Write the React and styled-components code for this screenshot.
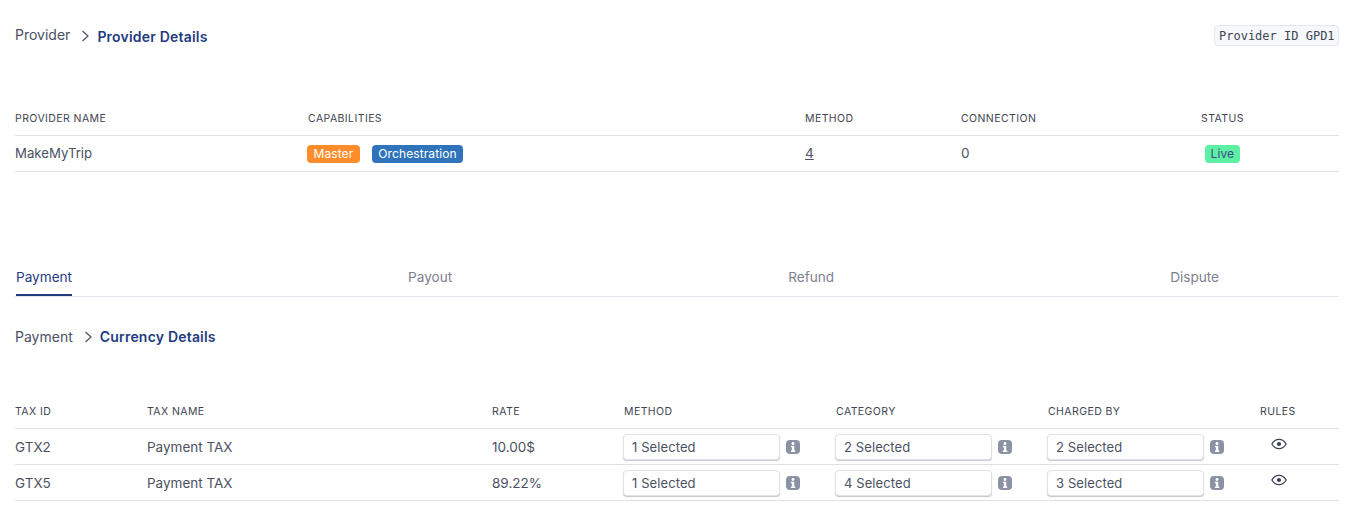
import React from "react";
import styled, { createGlobalStyle } from "styled-components";

const Global = createGlobalStyle`
  html, body { margin: 0; padding: 0; background: #fff; }
  body { font-family: Inter, "Liberation Sans", sans-serif; color: #414552; }
  * { box-sizing: border-box; }
`;
const Page = styled.div`
  padding: 0 20px 0 15px;
  height: 529px;
  overflow: hidden;
`;
const TopBar = styled.div`
  display: flex;
  justify-content: space-between;
  align-items: center;
  height: 22px;
  margin-top: 25px;
`;
const Crumbs = styled.div`
  display: flex;
  align-items: center;
  height: 22px;
`;
const CrumbLink = styled.span`
  font-size: 14px;
  line-height: 20px;
  color: #4b5162;
  position: relative;
  top: ${(p) => p.$lift || 0}px;
`;
const CrumbSep = styled.svg`
  width: 9px;
  height: 12px;
  margin: 0 ${(p) => p.$right}px 0 ${(p) => p.$left}px;
  flex: none;
`;
const CrumbTitle = styled.span`
  font-size: 14px;
  line-height: 20px;
  font-weight: 600;
  letter-spacing: 0.2px;
  color: #243b7f;
  position: relative;
  top: ${(p) => p.$drop || 0}px;
`;
const IdChip = styled.code`
  font-family: "DejaVu Sans Mono", "Liberation Mono", monospace;
  font-size: 12px;
  line-height: 20px;
  height: 21px;
  padding: 0 0 0 4px;
  width: 125px;
  white-space: nowrap;
  overflow: hidden;
  background: #f6f8fb;
  border: 1px solid #e3e8ee;
  border-radius: 4px;
  color: #414552;
  margin-top: -2px;
`;
const Row = styled.div`
  display: grid;
  grid-template-columns: ${(p) => p.$cols};
  align-items: center;
  height: ${(p) => p.$h}px;
  border-bottom: 1px solid #e0e0e0;
  font-size: 13.5px;
  color: #4b5162;
`;
const Head = styled.span`
  font-size: 10.5px;
  letter-spacing: 0.42px;
  line-height: 14px;
  color: #414552;
  text-transform: uppercase;
  white-space: nowrap;
`;
const ProviderTable = styled.div`
  margin-top: 55px;
`;
const Value = styled.span`
  margin-bottom: 2px;
`;
const Name = styled(Value)`
  font-size: 13.2px;
`;
const Badges = styled.div`
  display: flex;
  gap: 12px;
  margin-left: -1px;
`;
const Badge = styled.span`
  display: inline-block;
  height: 18px;
  line-height: 18px;
  padding: 0 ${(p) => p.$pad || 6.5}px;
  margin-left: ${(p) => p.$offset || 0}px;
  border-radius: 4px;
  font-size: 12px;
  letter-spacing: 0.1px;
  background: ${(p) => p.$bg};
  color: ${(p) => p.$fg || "#fff"};
`;
const Underlined = styled(Value)`
  text-decoration: underline;
`;
const Tabs = styled.div`
  display: flex;
  gap: 336px;
  margin-top: 89px;
  height: 36px;
  border-bottom: 1px solid #e3e8ee;
  padding-left: 1px;
`;
const Tab = styled.div`
  height: 35px;
  line-height: 33px;
  font-size: 13.6px;
  color: ${(p) => (p.$active ? "#243b7f" : "#7c8190")};
  border-bottom: ${(p) => (p.$active ? "2px solid #243b7f" : "none")};
`;
const SubCrumbs = styled(Crumbs)`
  margin-top: 29px;
`;
const TaxTable = styled.div`
  margin-top: 47px;
`;
const SelectWrap = styled.div`
  display: flex;
  align-items: center;
  gap: 6px;
  margin-left: -1px;
`;
const Select = styled.div`
  width: 157px;
  height: 26px;
  line-height: 25px;
  padding-left: 8px;
  font-size: 13px;
  letter-spacing: 0.1px;
  border: 1px solid #e0e2e7;
  border-radius: 4px;
  box-shadow: 0 1px 1px rgba(60, 66, 87, 0.3);
  color: #4b5162;
  background: #fff;
`;
const EyeBox = styled.div`
  display: flex;
  padding: 0 0 5px 11px;
`;

const Chevron = ({ left, right }) => (
  <CrumbSep $left={left} $right={right} viewBox="0 0 9 12" fill="none" stroke="#4b5162" strokeWidth="1.2">
    <path d="M1.5 1 L7 6 L1.5 11" />
  </CrumbSep>
);
const Info = () => (
  <svg width="14" height="14" viewBox="0 0 14 14" style={{ flex: "none" }}>
    <rect width="14" height="14" rx="4" fill="#8a92a3" />
    <circle cx="7" cy="3.5" r="1.4" fill="#fff" />
    <path d="M4.9 5.7h3.4v4.7h1v1.6H4.9v-1.6h1V7.3h-1z" fill="#fff" />
  </svg>
);
const Eye = () => (
  <svg width="16" height="12" viewBox="0 0 16 12" fill="none">
    <path d="M0.9 6C2.6 2.9 5 1.3 8 1.3S13.4 2.9 15.1 6C13.4 9.1 11 10.7 8 10.7S2.6 9.1.9 6Z" stroke="#3c4257" strokeWidth="1.3" />
    <circle cx="8" cy="6" r="2.1" fill="#3c4257" />
  </svg>
);

const topCols = "293px 497px 156px 240px 1fr";
const taxCols = "132px 345px 132px 212px 212px 212px 1fr";
const taxRows = [
  ["GTX2", "Payment TAX", "10.00$", "1 Selected", "2 Selected", "2 Selected"],
  ["GTX5", "Payment TAX", "89.22%", "1 Selected", "4 Selected", "3 Selected"],
];

export default function App() {
  return (
    <Page>
      <Global />
      <TopBar>
        <Crumbs>
          <CrumbLink $lift={-1}>Provider</CrumbLink>
          <Chevron left={11} right={7} />
          <CrumbTitle $drop={1}>Provider Details</CrumbTitle>
        </Crumbs>
        <IdChip>Provider ID GPD1</IdChip>
      </TopBar>
      <ProviderTable>
        <Row $cols={topCols} $h={34}>
          <Head>Provider Name</Head>
          <Head>Capabilities</Head>
          <Head>Method</Head>
          <Head>Connection</Head>
          <Head>Status</Head>
        </Row>
        <Row $cols={topCols} $h={36}>
          <Name>MakeMyTrip</Name>
          <Badges>
            <Badge $bg="#ff8c2b">Master</Badge>
            <Badge $bg="#2f74bb">Orchestration</Badge>
          </Badges>
          <Underlined>4</Underlined>
          <Value>0</Value>
          <div>
            <Badge $bg="#5ef0a2" $fg="#3c4a8c" $pad={5.5} $offset={4}>Live</Badge>
          </div>
        </Row>
      </ProviderTable>
      <Tabs>
        <Tab $active>Payment</Tab>
        <Tab>Payout</Tab>
        <Tab>Refund</Tab>
        <Tab>Dispute</Tab>
      </Tabs>
      <SubCrumbs>
        <CrumbLink>Payment</CrumbLink>
        <Chevron left={11} right={7} />
        <CrumbTitle>Currency Details</CrumbTitle>
      </SubCrumbs>
      <TaxTable>
        <Row $cols={taxCols} $h={34}>
          <Head>Tax ID</Head>
          <Head>Tax Name</Head>
          <Head>Rate</Head>
          <Head>Method</Head>
          <Head>Category</Head>
          <Head>Charged By</Head>
          <Head>Rules</Head>
        </Row>
        {taxRows.map((r) => (
          <Row $cols={taxCols} $h={36} key={r[0]}>
            <span>{r[0]}</span>
            <span>{r[1]}</span>
            <span>{r[2]}</span>
            {[r[3], r[4], r[5]].map((s, i) => (
              <SelectWrap key={i}>
                <Select>{s}</Select>
                <Info />
              </SelectWrap>
            ))}
            <EyeBox>
              <Eye />
            </EyeBox>
          </Row>
        ))}
      </TaxTable>
    </Page>
  );
}
